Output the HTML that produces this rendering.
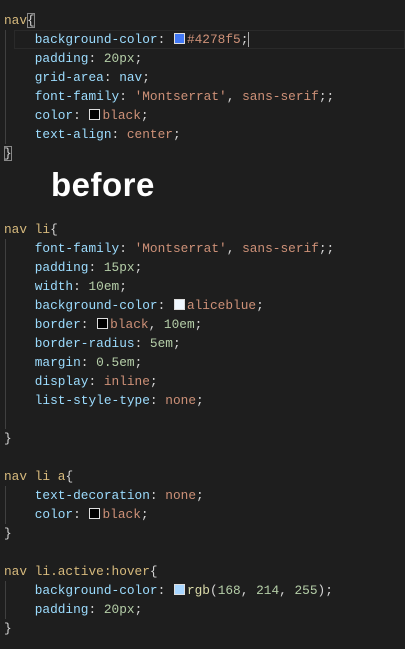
<!DOCTYPE html>
<html><head><style>
html,body{margin:0;padding:0;background:#1e1e1e;width:405px;height:649px;overflow:hidden}
#c{position:absolute;top:10.5px;left:4px;font-family:"Liberation Mono",monospace;font-size:12.8px;line-height:19px;color:#d4d4d4}
.l{height:19px;position:relative;white-space:pre}
.s{color:#d7ba7d}.p{color:#9cdcfe}.v{color:#ce9178}.n{color:#b5cea8}
.sw{display:inline-block;width:9px;height:9px;border:1px solid #ddd;margin:0 2px 0 1px;vertical-align:-1px}
.g{position:absolute;left:5px;width:1px;background:#404040}
.cur{position:absolute;left:14px;right:0;top:29.5px;height:17px;border:1px solid #2a2a2a}
.br{outline:1px solid #888;outline-offset:-1px}
#b{position:absolute;left:51px;top:166px;font:bold 33px "Liberation Sans",sans-serif;color:#fff;letter-spacing:0.5px}
</style></head><body>
<div class="cur"></div>
<div class="g" style="top:30px;height:114px"></div>
<div class="g" style="top:239px;height:190px"></div>
<div class="g" style="top:486px;height:38px"></div>
<div class="g" style="top:581px;height:38px"></div>
<div id="c"><div class="l"><span class="s">nav</span><span class="br">{</span></div><div class="l">    <span class="p">background-color</span>: <span class="sw" style="background:#4278f5"></span><span class="v">#4278f5</span>;<span style="border-left:1px solid #aaa"></span></div><div class="l">    <span class="p">padding</span>: <span class="n">20px</span>;</div><div class="l">    <span class="p">grid-area</span>: <span class="p">nav</span>;</div><div class="l">    <span class="p">font-family</span>: <span class="v">'Montserrat'</span>, <span class="v">sans-serif</span>;;</div><div class="l">    <span class="p">color</span>: <span class="sw" style="background:#000"></span><span class="v">black</span>;</div><div class="l">    <span class="p">text-align</span>: <span class="v">center</span>;</div><div class="l"><span class="br">}</span></div><div class="l"></div><div class="l"></div><div class="l"></div><div class="l"><span class="s">nav li</span>{</div><div class="l">    <span class="p">font-family</span>: <span class="v">'Montserrat'</span>, <span class="v">sans-serif</span>;;</div><div class="l">    <span class="p">padding</span>: <span class="n">15px</span>;</div><div class="l">    <span class="p">width</span>: <span class="n">10em</span>;</div><div class="l">    <span class="p">background-color</span>: <span class="sw" style="background:#f0f8ff"></span><span class="v">aliceblue</span>;</div><div class="l">    <span class="p">border</span>: <span class="sw" style="background:#000"></span><span class="v">black</span>, <span class="n">10em</span>;</div><div class="l">    <span class="p">border-radius</span>: <span class="n">5em</span>;</div><div class="l">    <span class="p">margin</span>: <span class="n">0.5em</span>;</div><div class="l">    <span class="p">display</span>: <span class="v">inline</span>;</div><div class="l">    <span class="p">list-style-type</span>: <span class="v">none</span>;</div><div class="l"></div><div class="l">}</div><div class="l"></div><div class="l"><span class="s">nav li a</span>{</div><div class="l">    <span class="p">text-decoration</span>: <span class="v">none</span>;</div><div class="l">    <span class="p">color</span>: <span class="sw" style="background:#000"></span><span class="v">black</span>;</div><div class="l">}</div><div class="l"></div><div class="l"><span class="s">nav li.active:hover</span>{</div><div class="l">    <span class="p">background-color</span>: <span class="sw" style="background:rgb(168,214,255)"></span><span style="color:#dcdcaa">rgb</span>(<span class="n">168</span>, <span class="n">214</span>, <span class="n">255</span>);</div><div class="l">    <span class="p">padding</span>: <span class="n">20px</span>;</div><div class="l">}</div></div>
<div id="b">before</div>
</body></html>
